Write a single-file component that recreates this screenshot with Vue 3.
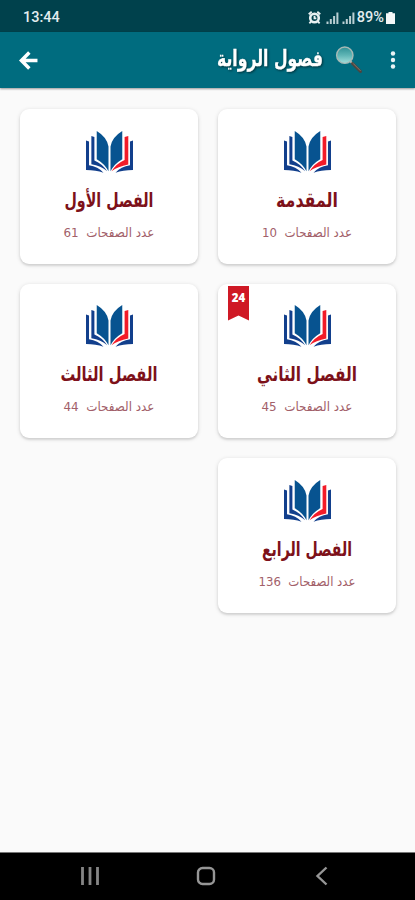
<script setup>
const chapters = [
  { title: 'المقدمة', pages: 10, titleWidth: 62, pagesWidth: 90 },
  { title: 'الفصل الأول', pages: 61, titleWidth: 89, pagesWidth: 91 },
  { title: 'الفصل الثاني', pages: 45, titleWidth: 100, pagesWidth: 91, badge: 24 },
  { title: 'الفصل الثالث', pages: 44, titleWidth: 97, pagesWidth: 91 },
  { title: 'الفصل الرابع', pages: 136, titleWidth: 90, pagesWidth: 97 },
]
</script>

<template>
  <div class="screen">
    <header class="status">
      <span class="clock">13:44</span>
      <div class="indicators">
        <svg class="alarm" viewBox="0 0 14 14">
          <circle cx="7" cy="7.500" r="4.600" fill="none" stroke="#e8f0f1" stroke-width="2.800" />
          <path d="M.8 3.500 4 .8M13.200 3.500 10 .8M3.500 11 1.500 13.200M10.500 11l2 2.200M7 5v3h2" fill="none" stroke="#e8f0f1" stroke-width="2" />
        </svg>
        <svg v-for="n in 2" :key="n" class="signal" viewBox="0 0 13 12">
          <path d="M1.500 12V9.500M4.800 12V7M8.100 12V4M11.400 12V.5" stroke="#b9cfd3" stroke-width="2" />
        </svg>
        <span class="percent">89%</span>
        <svg class="battery" viewBox="0 0 9 12"><path d="M2.500 0h4v1.200H9V12H0V1.200h2.500z" fill="#f4f8f8" /></svg>
      </div>
    </header>

    <nav class="bar">
      <svg class="back" viewBox="0 0 18 18"><path d="M17.500 9H3M9.800 1.500 2.300 9l7.500 7.500" fill="none" stroke="#fff" stroke-width="3.300" /></svg>
      <div class="heading">
        <svg class="heading-text" width="108" height="34">
          <text x="107" y="23" textLength="106" lengthAdjust="spacingAndGlyphs">فصول الرواية</text>
        </svg>
        <svg class="lens" viewBox="0 0 28 28">
          <defs>
            <linearGradient id="glass" x1="0" y1="0" x2="0" y2="1">
              <stop offset="0" stop-color="#2f9095" />
              <stop offset=".5" stop-color="#5fb5b5" />
              <stop offset="1" stop-color="#a4dfdc" />
            </linearGradient>
          </defs>
          <path d="m14.500 14.500 4 4" stroke="#b5b5ae" stroke-width="2" />
          <path d="m17.500 17.500 8 8" stroke="#4b4540" stroke-width="3" stroke-linecap="round" />
          <path d="m18 17.300 7.500 7.500" stroke="#99826e" stroke-width=".8" />
          <circle cx="9.800" cy="9.200" r="8.200" fill="url(#glass)" stroke="#a6b9b5" stroke-width="1.400" />
        </svg>
      </div>
      <svg class="more" viewBox="0 0 6 18"><g fill="#e9f4f5"><circle cx="3" cy="2.500" r="2.200" /><circle cx="3" cy="9" r="2.200" /><circle cx="3" cy="15.500" r="2.200" /></g></svg>
    </nav>

    <main class="grid" dir="rtl">
      <article v-for="c in chapters" :key="c.title" class="card">
        <div v-if="c.badge" class="badge">{{ c.badge }}</div>
        <svg class="book" viewBox="0 0 140 125">
          <g fill="#075390">
            <path d="M32 0Q62 18 67 46V120Q56 98 32 84Z" />
            <path d="M108 0Q78 18 73 46V120Q84 98 108 84Z" />
          </g>
          <g fill="#123f8c">
            <path d="M16 15l9 3V88Q49 98 63 120Q45 104 16 99Z" />
            <path d="M0 28l9 3V102Q36 106 52 124Q30 116 0 116Z" />
            <path d="M140 28l-9 3V102Q104 106 88 124Q110 116 140 116Z" />
          </g>
          <path d="M126 15l-11 3V86Q90 97 76 120Q95 106 126 100Z" fill="#f21b28" />
        </svg>
        <svg class="title" width="120" height="34">
          <text :x="60 + c.titleWidth / 2" y="21" :textLength="c.titleWidth" lengthAdjust="spacingAndGlyphs">{{ c.title }}</text>
        </svg>
        <svg class="pages" width="120" height="24">
          <text :x="60 + c.pagesWidth / 2" y="15" :textLength="c.pagesWidth" lengthAdjust="spacingAndGlyphs">عدد الصفحات&nbsp; {{ c.pages }}</text>
        </svg>
      </article>
    </main>

    <footer class="system">
      <svg viewBox="0 0 20 20"><path d="M2.500 1v18M10 1v18M17.500 1v18" stroke="#858585" stroke-width="2.800" /></svg>
      <svg viewBox="0 0 20 20"><rect x="2" y="2" width="16" height="16" rx="4.500" fill="none" stroke="#969696" stroke-width="2.400" /></svg>
      <svg viewBox="0 0 20 20"><path d="M14.500 1.500 5.500 10l9 8.500" fill="none" stroke="#969696" stroke-width="2.400" /></svg>
    </footer>
  </div>
</template>

<style>
body { margin: 0; }
</style>

<style scoped>
.screen {
  width: 415px;
  height: 900px;
  display: flex;
  flex-direction: column;
  background: #fafafa;
  font-family: "DejaVu Sans", sans-serif;
  overflow: hidden;
}
svg { display: block; flex: none; }
.status {
  box-sizing: border-box;
  height: 32px;
  padding: 3px 20px 0 23px;
  display: flex;
  align-items: center;
  justify-content: space-between;
  background: #00414c;
  color: #e3edef;
  font: 500 14.500px Roboto, sans-serif;
}
.indicators { display: flex; align-items: center; gap: 3px; }
.alarm { width: 13px; height: 13px; margin-right: 2px; }
.signal { width: 13px; height: 12px; }
.percent { margin: 0 -1px 0 -1px; font-size: 14.500px; }
.battery { width: 9px; height: 12px; }
.bar {
  box-sizing: border-box;
  height: 56px;
  padding: 0 19px 0 19px;
  display: flex;
  align-items: center;
  background: #006c7f;
  box-shadow: 0 1px 2px #0006;
}
.back { width: 19px; height: 19px; }
.heading { display: flex; align-items: center; margin-left: auto; gap: 11px; }
.heading-text { overflow: visible; }
.heading-text text {
  direction: rtl;
  fill: #fff;
  stroke: #fff;
  stroke-width: .3px;
  font: bold 22px "DejaVu Sans", sans-serif;
  filter: drop-shadow(1px 1px 1px #0008);
}
.lens { width: 28px; height: 28px; }
.more { width: 6px; height: 18px; margin-left: 27px; }
.grid {
  flex: 1;
  padding: 21px 19px 0 20px;
  display: grid;
  grid-template-columns: 178px 178px;
  grid-auto-rows: 154.500px;
  gap: 20px;
  align-content: start;
}
.card {
  position: relative;
  display: flex;
  flex-direction: column;
  align-items: center;
  border-radius: 9px;
  background: #fff;
  box-shadow: 0 1px 4px #00000026, 0 2px 2px #00000014;
}
.book { width: 47px; height: 42px; margin-top: 21.500px; }
.title { margin-top: 13px; overflow: visible; }
.title text { direction: rtl; fill: #7d1119; font: bold 20px "DejaVu Sans", sans-serif; }
.pages { margin-top: 2px; overflow: visible; }
.pages text { direction: rtl; fill: #a26069; font: 12.500px "DejaVu Sans", sans-serif; }
.badge {
  position: absolute;
  left: 10px;
  top: 2px;
  width: 21px;
  height: 35px;
  box-sizing: border-box;
  padding-top: 4px;
  text-align: center;
  background: #cf1925;
  color: #fff;
  font: 800 11.500px/16px "Open Sans", sans-serif;
  clip-path: polygon(0 0, 100% 0, 100% 100%, 50% 86%, 0 100%);
}
.system {
  box-sizing: border-box;
  height: 48px;
  padding: 0 83px 2px 80px;
  border-top: 1px solid #777;
  display: flex;
  align-items: center;
  justify-content: space-between;
  background: #000;
}
.system svg { width: 20px; height: 20px; }
</style>
